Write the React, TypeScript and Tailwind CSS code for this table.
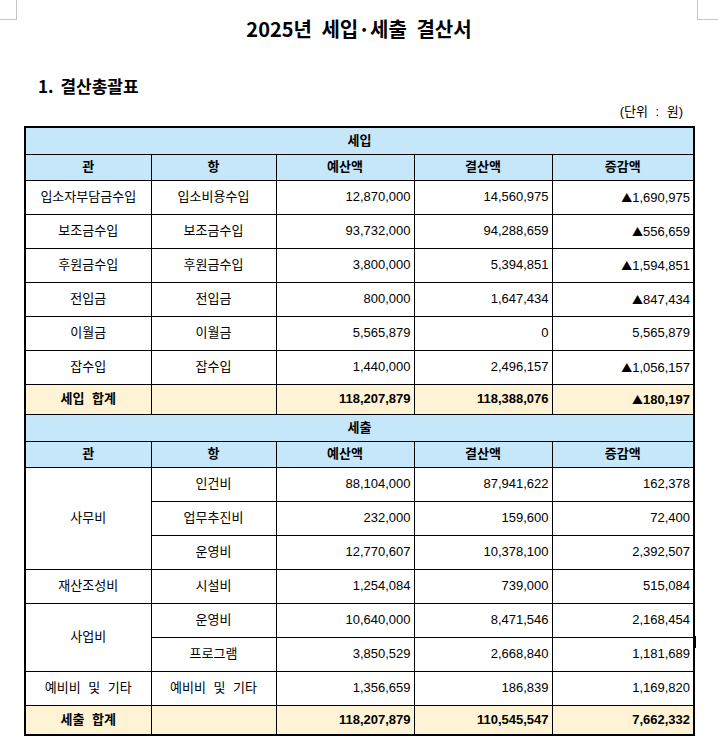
const KR = "font-['Liberation_Sans','Noto_Sans_CJK_KR',sans-serif]";

type Row = { gwan?: string; span?: number; hang: string; budget: string; result: string; diff: string };

const incomeRows: Row[] = [
  { gwan: "입소자부담금수입", hang: "입소비용수입", budget: "12,870,000", result: "14,560,975", diff: "▲1,690,975" },
  { gwan: "보조금수입", hang: "보조금수입", budget: "93,732,000", result: "94,288,659", diff: "▲556,659" },
  { gwan: "후원금수입", hang: "후원금수입", budget: "3,800,000", result: "5,394,851", diff: "▲1,594,851" },
  { gwan: "전입금", hang: "전입금", budget: "800,000", result: "1,647,434", diff: "▲847,434" },
  { gwan: "이월금", hang: "이월금", budget: "5,565,879", result: "0", diff: "5,565,879" },
  { gwan: "잡수입", hang: "잡수입", budget: "1,440,000", result: "2,496,157", diff: "▲1,056,157" },
];

const expenseRows: Row[] = [
  { gwan: "사무비", span: 3, hang: "인건비", budget: "88,104,000", result: "87,941,622", diff: "162,378" },
  { hang: "업무추진비", budget: "232,000", result: "159,600", diff: "72,400" },
  { hang: "운영비", budget: "12,770,607", result: "10,378,100", diff: "2,392,507" },
  { gwan: "재산조성비", hang: "시설비", budget: "1,254,084", result: "739,000", diff: "515,084" },
  { gwan: "사업비", span: 2, hang: "운영비", budget: "10,640,000", result: "8,471,546", diff: "2,168,454" },
  { hang: "프로그램", budget: "3,850,529", result: "2,668,840", diff: "1,181,689" },
  { gwan: "예비비 및 기타", hang: "예비비 및 기타", budget: "1,356,659", result: "186,839", diff: "1,169,820" },
];

const cell = "border border-black";
const num = `${cell} text-right pr-[3px]`;

// ▲ looks bigger in the original, so give it the CJK font
function Amount({ v }: { v: string }) {
  if (!v.startsWith("▲")) return <>{v}</>;
  return (
    <>
      <span className="font-['Noto_Sans_CJK_KR',sans-serif] text-[11px]">▲</span>
      {v.slice(1)}
    </>
  );
}

function Section({ title, rows, totalLabel, totals }: { title: string; rows: Row[]; totalLabel: string; totals: string[] }) {
  return (
    <>
      <tr className="h-[27px] bg-[#c6e7fa] font-bold">
        <td colSpan={5} className={`${cell} text-center`}>{title}</td>
      </tr>
      <tr className="h-[26px] bg-[#c6e7fa] font-bold text-center">
        <td className={cell}>관</td>
        <td className={cell}>항</td>
        <td className={cell}>예산액</td>
        <td className={cell}>결산액</td>
        <td className={cell}>증감액</td>
      </tr>
      {rows.map((r, i) => (
        <tr key={i} className="h-[34px]">
          {r.gwan && (
            <td rowSpan={r.span ?? 1} className={`${cell} text-center`}>{r.gwan}</td>
          )}
          <td className={`${cell} text-center`}>{r.hang}</td>
          <td className={num}>{r.budget}</td>
          <td className={num}>{r.result}</td>
          <td className={num}><Amount v={r.diff} /></td>
        </tr>
      ))}
      <tr className="h-[30px] bg-[#fff3d6] font-bold">
        <td className={`${cell} text-center`}>{totalLabel}</td>
        <td className={cell}></td>
        <td className={num}>{totals[0]}</td>
        <td className={num}>{totals[1]}</td>
        <td className={num}><Amount v={totals[2]} /></td>
      </tr>
    </>
  );
}

export default function App() {
  return (
    <div className={`relative w-[718px] h-[746px] bg-white text-black overflow-hidden ${KR}`}>
      {/* page margin marks */}
      <div className="absolute left-0 top-0 w-[17px] h-[20px] border-r border-b border-[#c4c4c4]" />
      <div className="absolute right-0 top-0 w-[21px] h-[20px] border-l border-b border-[#c4c4c4]" />
      <div className="absolute left-[694px] top-[636px] w-[2px] h-[12px] bg-black" />

      <h1 className="pt-[16px] text-center text-[20px] font-bold leading-[26px] [word-spacing:5px] font-['Noto_Sans_CJK_KR',sans-serif]">
        2025년 세입·세출 결산서
      </h1>
      <h2 className="mt-[34px] ml-[38px] text-[17px] font-bold leading-[20px] [word-spacing:3px] font-['Noto_Sans_CJK_KR',sans-serif]">
        1. 결산총괄표
      </h2>
      <div className="mt-[8px] pr-[35px] text-right text-[13px] leading-[16px] [word-spacing:4px]">
        (단위 : 원)
      </div>
      <table className="mt-[6px] ml-[24px] w-[669px] table-fixed border-collapse border-2 border-black text-[13px] leading-[16px] [word-spacing:4px]">
        <colgroup>
          <col className="w-[126px]" />
          <col className="w-[125px]" />
          <col className="w-[138px]" />
          <col className="w-[138px]" />
          <col className="w-[142px]" />
        </colgroup>
        <tbody>
          <Section
            title="세입"
            rows={incomeRows}
            totalLabel="세입 합계"
            totals={["118,207,879", "118,388,076", "▲180,197"]}
          />
          <Section
            title="세출"
            rows={expenseRows}
            totalLabel="세출 합계"
            totals={["118,207,879", "110,545,547", "7,662,332"]}
          />
        </tbody>
      </table>
    </div>
  );
}
